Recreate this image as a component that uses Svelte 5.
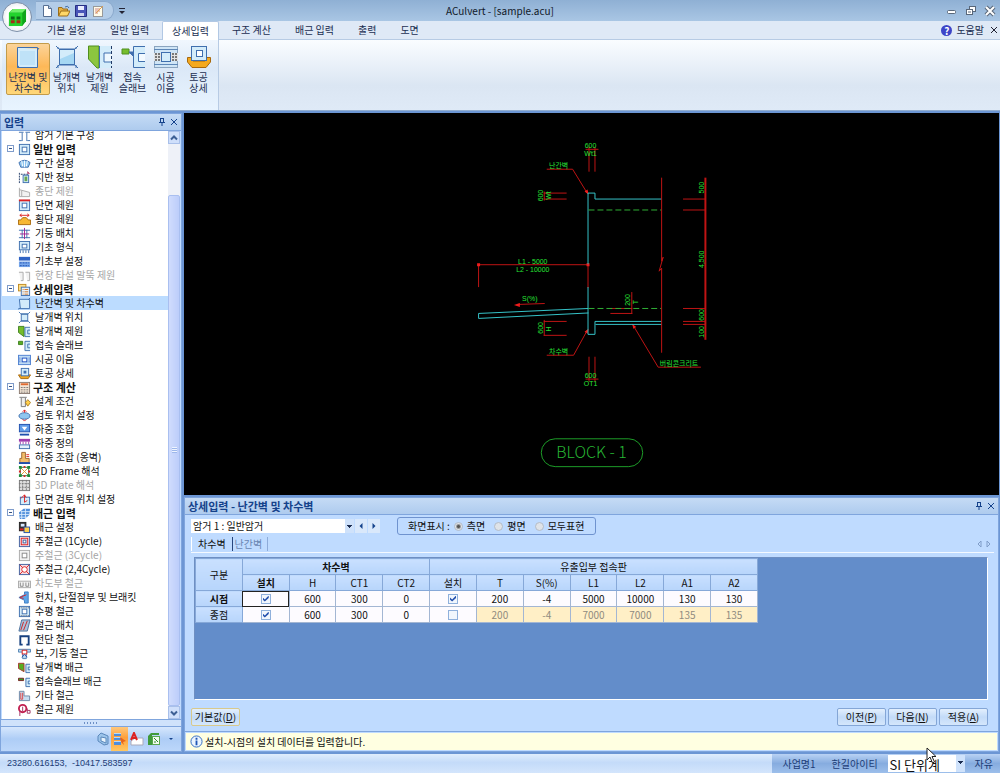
<script>
  let activeTab = $state('상세입력');
  let activeTool = $state(0);
  let selected = $state('난간벽 및 차수벽');
  let view = $state('측면');

  const tabs = ['기본 설정', '일반 입력', '상세입력', '구조 계산', '배근 입력', '출력', '도면'];

  const outline = 'fill="#d3ecfa" stroke="#3f6fae"';
  const pale = 'fill="#f2f2f2" stroke="#a9a9a9"';

  // ribbon artwork, 24 x 24
  const tools = [
    { lines: ['난간벽 및', '차수벽'], art: `<path d="M1.500 2.500V22.500H21.500V4M1.500 2.500H21.500V5L23 3M1 22.500L3 21" ${outline}/><path d="M4 6V20H19V6Z" fill="#bfe2f7"/>` },
    { lines: ['날개벽', '위치'], art: `<rect x="4.500" y="4.500" width="15" height="15" ${outline}/><path d="M1 1L4 4H20L23 1M1 23L4 20H20L23 23M3 2V4M21 2V4M3 20V23M21 20V23" fill="none" stroke="#3f6fae"/><path d="M5 14L19 8V19H5Z" fill="#a5d7f3"/>` },
    { lines: ['날개벽', '제원'], art: `<path d="M0.500 1H11V23H9L0.500 14Z" fill="#8cc63f" stroke="#4f8f1e"/><path d="M11 1H24V23H11Z" fill="#d3ecfa"/><path d="M24 8H16V17H24" fill="#eef8fe" stroke="#3f6fae"/><path d="M11.500 1V23" stroke="#3f6fae"/><path d="M24 1V23" stroke="#223a66" stroke-width="2" stroke-dasharray="3 2"/>` },
    { lines: ['접속', '슬래브'], art: `<path d="M1 4H8V9H1Z" fill="#76bd2c" stroke="#4f8f1e"/><path d="M8 7H12V11Z" fill="#426fae" stroke="#426fae"/><path d="M24 1.500H12.500V22.500H24" ${outline}/><path d="M24 8.500H17.500V16.500H24" fill="#f3faff" stroke="#3f6fae"/>` },
    { lines: ['시공', '이음'], art: `<rect x="0.500" y="1.500" width="23" height="21" fill="#cfe5f6" stroke="#8aa4bf"/><path d="M0 8H24V16H0Z" fill="#e2e2e2"/><path d="M0 4.500H24M0 19.500H24" stroke="#5e87b7"/><rect x="7.500" y="7.500" width="9" height="9" ${outline}/><path d="M1 9H6M1 12H6M1 15H6M18 9H23M18 12H23M18 15H23" stroke="#777" stroke-width="2" stroke-dasharray="2 1"/>` },
    { lines: ['토공', '상세'], art: `<path d="M0.500 12.500H6V16H18V12.500H23.500V17L19 22.500H5L0.500 17Z" fill="#f4a91f" stroke="#a8690c"/><rect x="4.500" y="1.500" width="15" height="14" ${outline}/><rect x="9.500" y="5.500" width="6" height="6" fill="#fff" stroke="#3f6fae"/>` }
  ];

  // tree artwork, 14 x 14
  const box = (s) => `<rect x="1.500" y="1.500" width="11" height="11" ${s}/><rect x="4.500" y="4.500" width="5" height="5" fill="#fff" stroke="#3f6fae"/>`;
  const tree = [
    { name: '암거 기본 구성', art: '<path d="M1 3.500H6M8 3.500H13M4.500 4V13M9.500 4V13M1 12.500H4M10 12.500H13" stroke="#3f6fae" fill="none"/><path d="M3 1H11" stroke="#333"/>' },
    { name: '일반 입력', group: true, art: box(outline) },
    { name: '구간 설정', art: '<path d="M1 6Q7 1 13 6L11 11H3Z" fill="#8fc6ef" stroke="#3f6fae"/><path d="M7 4V11M4 4L5 10M10 4L9 10" stroke="#fff"/>' },
    { name: '지반 정보', art: '<path d="M1.500 2V13M3 3.500H12" stroke="#223a66" stroke-dasharray="2 1"/><rect x="5.500" y="4.500" width="6" height="8" fill="#d3ecfa" stroke="#3f6fae"/><path d="M7 6H10V11H7Z" fill="#6aa84f"/><path d="M10 0L13 3H10Z" fill="#b03060"/>' },
    { name: '종단 제원', off: true, art: `<path d="M1.500 3V12.500H12.500V8L1.500 5M4 6V12" ${pale}/>` },
    { name: '단면 제원', art: box(outline) + '<path d="M1 1.500H13" stroke="#d22" stroke-width="2"/>' },
    { name: '횡단 제원', art: '<path d="M0.500 7.500H3L5 5H9L11 7.500H13.500V12.500H0.500Z" fill="#f7b733" stroke="#a8690c"/><path d="M2 2.500H12M4 1L2 2.500L4 4M10 1L12 2.500L10 4" stroke="#d22" fill="none"/>' },
    { name: '기둥 배치', art: '<path d="M1 3.500H13M1 11.500H13M4.500 3V12M9.500 3V12" stroke="#3f6fae"/><path d="M7 1V13M2 7.500H12" stroke="#a02090"/>' },
    { name: '기초 형식', art: `<rect x="1.500" y="0.500" width="11" height="9" ${outline}/><rect x="4.500" y="3.500" width="5" height="4" fill="#fff" stroke="#3f6fae"/><path d="M2.500 10V13M5.500 10V13M8.500 10V13M11.500 10V13" stroke="#3f6fae"/>` },
    { name: '기초부 설정', art: '<rect x="1" y="2" width="12" height="4" fill="#2f63c4"/><rect x="1" y="7" width="12" height="6" fill="#79a8ec"/><path d="M2 8.500H12M2 11.500H12" stroke="#1f4fae" stroke-dasharray="2 1"/>' },
    { name: '현장 타설 말뚝 제원', off: true, art: `<path d="M1 3.500H5.500V12.500H3M8 3.500H12.500V12.500H10" ${pale}/>` },
    { name: '상세입력', group: true, art: '<rect x="0.500" y="1.500" width="8" height="7" fill="#ffe08a" stroke="#c08a20"/><rect x="3.500" y="4.500" width="9" height="9" fill="#e5f2fc" stroke="#3f6fae"/><path d="M5 7H6M7 7H11M5 9.500H6M7 9.500H11M5 12H6M7 12H11" stroke="#d07020"/>' },
    { name: '난간벽 및 차수벽', art: `<path d="M1.500 2.500H12.500V12.500H2.500Z" ${outline}/><path d="M0 13L3 12M11 3L13 1" stroke="#3f6fae"/>` },
    { name: '날개벽 위치', art: `<rect x="3.500" y="3.500" width="7" height="7" ${outline}/><path d="M1 1L3 3H11L13 1M1 13L3 11H11L13 13" fill="none" stroke="#3f6fae"/>` },
    { name: '날개벽 제원', art: '<path d="M0.500 1.500H6.500V12.500L0.500 8Z" fill="#76bd2c" stroke="#3f8020"/><path d="M13 2.500H7.500V12.500H13M13 5.500H10.500V9.500H13" fill="#d3ecfa" stroke="#3f6fae"/>' },
    { name: '접속 슬래브', art: '<path d="M0.500 2.500H5V6H0.500Z" fill="#58ad22" stroke="#3f8020"/><path d="M13 2.500H7.500V12.500H13M13 5.500H10.500V9.500H13" fill="#d3ecfa" stroke="#3f6fae"/>' },
    { name: '시공 이음', art: '<rect x="0.500" y="2.500" width="13" height="10" fill="#bfdcf4" stroke="#4d7fd0"/><rect x="4.500" y="5.500" width="5" height="4" fill="#fff" stroke="#1f4fc0"/><path d="M2 5V10M12 5V10" stroke="#1f4fc0" stroke-dasharray="1 1"/>' },
    { name: '토공 상세', art: `<path d="M0.500 8.500H13.500L11 12.500H3Z" fill="#f4a91f" stroke="#a8690c"/><rect x="3.500" y="1.500" width="8" height="8" ${outline}/><rect x="6" y="4" width="3" height="3" fill="#3f6fae"/>` },
    { name: '구조 계산', group: true, art: '<rect x="1.500" y="1.500" width="11" height="12" fill="#f3e4d4" stroke="#8a7a70"/><path d="M3 3.500H11" stroke="#e06a30" stroke-width="2"/><path d="M3 7H11M3 9.500H11M3 12H11" stroke="#777" stroke-dasharray="2 1"/>' },
    { name: '설계 조건', art: '<path d="M1.500 2.500H9.500M3.500 3V12.500H8V3" fill="#eee" stroke="#777"/><path d="M10.500 5L13.500 8L10.500 12L8 8Z" fill="#ffcf4a" stroke="#b08020"/>' },
    { name: '검토 위치 설정', art: '<ellipse cx="7" cy="7.500" rx="6" ry="3.500" fill="#8fc6ef" stroke="#3f6fae"/><path d="M7 1V4M5 3L7 1L9 3M5 11L7 13L9 11" stroke="#d22" fill="none"/>' },
    { name: '하중 조합', art: '<rect x="1.500" y="1.500" width="11" height="8" fill="#5f9be8" stroke="#1f4fae"/><path d="M4 4H10L7 8Z" fill="#fff"/><path d="M2 12.500H12" stroke="#1f4fae" stroke-width="2"/>' },
    { name: '하중 정의', art: '<path d="M1 2H13V5H1Z" fill="#a03cae"/><path d="M2.500 5V8M5.500 5V8M8.500 5V8M11.500 5V8" stroke="#a03cae"/><rect x="1.500" y="8.500" width="11" height="4" fill="#e5f2fc" stroke="#3f6fae"/>' },
    { name: '하중 조합 (옹벽)', art: '<path d="M4 1.500H8V8H12V12.500H2V8H4Z" fill="#f2bd6a" stroke="#9a6630"/><path d="M1 13H13" stroke="#1f4fae" stroke-width="2"/><path d="M9 4H12M9 6H12" stroke="#d22"/>' },
    { name: '2D Frame 해석', art: '<path d="M2.500 2.500H11.500V11.500H2.500Z" fill="none" stroke="#2b7a3b"/><path d="M2 2L12 12M12 2L2 12" stroke="#df9a30"/><path d="M1 1H4V4H1ZM10 1H13V4H10ZM1 10H4V13H1ZM10 10H13V13H10Z" fill="#1d8a3a"/><path d="M6 2H8M6 12H8M2 6V8M12 6V8" stroke="#d22" stroke-width="2"/>' },
    { name: '3D Plate 해석', off: true, art: '<rect x="1.500" y="1.500" width="11" height="11" fill="#ddd" stroke="#777"/><path d="M1 5H13M1 9H13M5 1V13M9 1V13" stroke="#777" stroke-dasharray="2 1"/>' },
    { name: '단면 검토 위치 설정', art: '<rect x="2.500" y="4.500" width="10" height="8" fill="#d3ecfa" stroke="#3f6fae"/><path d="M3 6L7 2L9 5M7 2V10L10 8" stroke="#d22" fill="none"/>' },
    { name: '배근 입력', group: true, art: '<path d="M1 6L6 2H13L12 9L7 13H2Z" fill="#4f8edb"/><path d="M1 8H12M2 11H10M4 4V13M8 2V13M3 5H13" stroke="#d8ebfc"/>' },
    { name: '배근 설정', art: '<rect x="1.500" y="1.500" width="7" height="9" fill="#333" stroke="#222"/><path d="M3 3H7V6H3Z" fill="#d8e8ff"/><rect x="6.500" y="6.500" width="6" height="6" fill="#ffcf4a" stroke="#1f4fae"/><path d="M2 9H6" stroke="#d22" stroke-width="2"/>' },
    { name: '주철근 (1Cycle)', art: '<rect x="1.500" y="1.500" width="11" height="11" fill="#f5dfe6" stroke="#3f5f9e"/><rect x="3.500" y="3.500" width="7" height="7" fill="none" stroke="#d22"/><rect x="5.500" y="5.500" width="3" height="3" fill="#fff" stroke="#3f5f9e"/>' },
    { name: '주철근 (3Cycle)', off: true, art: `<rect x="1.500" y="1.500" width="11" height="11" ${pale}/><rect x="4.500" y="4.500" width="5" height="5" fill="#fff" stroke="#888"/>` },
    { name: '주철근 (2,4Cycle)', art: '<rect x="1.500" y="1.500" width="11" height="11" fill="#f5dfe6" stroke="#3f5f9e"/><circle cx="7" cy="7" r="3" fill="#fff" stroke="#d22"/><path d="M2 2L5 5M12 2L9 5M2 12L5 9M12 12L9 9" stroke="#d22"/>' },
    { name: '차도부 철근', off: true, art: `<rect x="0.500" y="4.500" width="13" height="7" ${pale}/><path d="M2.500 6V10H5.500V6M8.500 6V10H11.500V6" fill="none" stroke="#888"/>` },
    { name: '헌치, 단절점부 및 브래킷', art: '<path d="M11 1V13H7V10L1 7L7 4V1Z" fill="#5fa5e8" stroke="#3a7cc4"/><path d="M2 7L9 4M2 7L6 8" stroke="#d22" fill="none"/>' },
    { name: '수평 철근', art: box(outline) + '<path d="M3 3H12M3 11.500H12" stroke="#556" stroke-dasharray="1 1"/>' },
    { name: '철근 배치', art: '<path d="M4 1H13L10 13H1Z" fill="#a9c2dc" stroke="#4a6f9a"/><path d="M6 3L3 12M10 2L6 12" stroke="#c22"/>' },
    { name: '전단 철근', art: '<path d="M5 12.500H2.500V3.500H11.500V12.500H9" fill="none" stroke="#17407f" stroke-width="2"/>' },
    { name: '보, 기둥 철근', art: '<path d="M0.500 2.500H13.500V5.500H9V12.500H5V5.500H0.500Z" fill="#bcd9f0" stroke="#4d7fb0"/><rect x="4.500" y="3.500" width="5" height="4" fill="#fff" stroke="#d22"/><path d="M4 11L7 8L10 11" stroke="#1f4fae" fill="none"/>' },
    { name: '날개벽 배근', art: '<path d="M0.500 2.500H6.500V11.500L0.500 8Z" fill="#58ad22" stroke="#a33"/><path d="M13 3.500H8.500V12.500H13M13 6.500H11V9.500H13" fill="#d3ecfa" stroke="#3f6fae"/>' },
    { name: '접속슬래브 배근', art: '<path d="M0.500 3.500H6V6H0.500Z" fill="#3c9a22" stroke="#722"/><path d="M13 3.500H8.500V12.500H13M13 6.500H11V9.500H13" fill="#d3ecfa" stroke="#3f6fae"/>' },
    { name: '기타 철근', art: '<path d="M1.500 2.500H6.500V7.500H12.500V12.500H1.500Z" fill="#c7dcf0" stroke="#6d87a5"/><path d="M3 4V11H5V4" fill="none" stroke="#d44"/>' },
    { name: '철근 제원', art: '<circle cx="5" cy="6" r="4" fill="#fff" stroke="#c22050" stroke-width="2"/><path d="M5 4V9M2 9V14M10 6V11H13V8H10" stroke="#a03060" fill="none"/>' }
  ];

  const columns = ['H', 'CT1', 'CT2', '설치', 'T', 'S(%)', 'L1', 'L2', 'A1', 'A2'];
  const rows = $state([
    { name: '시점', wall: true, slab: true, left: [600, 300, 0], right: [200, -4, 5000, 10000, 130, 130] },
    { name: '종점', wall: true, slab: false, left: [600, 300, 0], right: [200, -4, 7000, 7000, 135, 135] }
  ]);
</script>

<div class="window">
  <header>
    <div class="titlebar">
      <div class="quick">
        <button aria-label="새 파일"><svg viewBox="0 0 12 12"><path d="M2.500 0.500H7.500L10.500 3.500V11.500H2.500Z" fill="#fff" stroke="#566f93" /><path d="M7.500 0.500V3.500H10.500" fill="#bcd" stroke="#566f93" /></svg></button>
        <button aria-label="열기"><svg viewBox="0 0 12 12"><path d="M0.500 2.500H4L5 4H9.500V10.500H0.500Z" fill="#e8b040" stroke="#9a6d1a" /><path d="M3 6H12L9.500 11H0.500Z" fill="#ffd868" stroke="#9a6d1a" /><path d="M7 2Q10 0 11 3" fill="none" stroke="#3f6fae" /></svg></button>
        <button aria-label="저장"><svg viewBox="0 0 12 12"><path d="M0.500 0.500H11.500V11.500H0.500Z" fill="#4a55b8" stroke="#272f83" /><path d="M3 1H9V5H3Z" fill="#e9edff" /><path d="M3 8H9V11H3Z" fill="#cfd5ee" /></svg></button>
        <button aria-label="편집"><svg viewBox="0 0 12 12"><rect x="1.500" y="1.500" width="9" height="10" fill="#fffbe8" stroke="#999" /><path d="M3 4H8M3 6H8M3 8H6" stroke="#c88" /><path d="M4 8L11 1" stroke="#e0a050" /></svg></button>
      </div>
      <button class="more" aria-label="도구 모음 사용자 지정"><svg viewBox="0 0 8 8"><path d="M1 1.500H7" stroke="#223" /><path d="M1 4H7L4 7Z" fill="#223" /></svg></button>
      <h1>ACulvert - [sample.acu]</h1>
      <div class="controls">
        <button aria-label="최소화"><svg viewBox="0 0 12 12"><rect x="1.500" y="5.500" width="8" height="3" rx="1" fill="#fff" stroke="#596779" /></svg></button>
        <button aria-label="이전 크기로"><svg viewBox="0 0 12 12"><rect x="4.500" y="1.500" width="6" height="5" fill="#fff" stroke="#596779" /><rect x="1.500" y="4.500" width="6" height="5" fill="#fff" stroke="#596779" /><path d="M3 7H6" stroke="#596779" /></svg></button>
        <button aria-label="닫기"><svg viewBox="0 0 12 12"><path d="M2 2L10 10M10 2L2 10" stroke="#596779" stroke-width="4" /><path d="M2 2L10 10M10 2L2 10" stroke="#fff" stroke-width="2" /></svg></button>
      </div>
    </div>
    <button class="orb" aria-label="응용 프로그램 메뉴">
      <svg viewBox="0 0 20 20"><path d="M1 5L5 1H19V14L15 19H1Z" fill="#0fa51b" /><path d="M1 5L5 1H19L15 5Z" fill="#6df06a" /><path d="M1 5H15V19H1Z" fill="#22d32d" /><path d="M3 9H7V12H3ZM9 9H13V12H9Z" fill="#0b6a17" /><path d="M3 13H7V16H3ZM9 13H13V16H9Z" fill="#a33018" /></svg>
    </button>
    <nav>
      {#each tabs as tab}
        <button class:active={tab === activeTab} onclick={() => (activeTab = tab)}>{tab}</button>
      {/each}
      <div class="help">
        <a href="#help"><span class="question">?</span>도움말</a>
        <button aria-label="문서 닫기"><svg viewBox="0 0 8 8"><path d="M1 1L7 7M7 1L1 7" stroke="#223" stroke-width="1" /></svg></button>
      </div>
    </nav>
    <div class="ribbon">
      <div class="tools">
        {#each tools as tool, index}
          <button class:wide={index === 0} class:on={index === activeTool} onclick={() => (activeTool = index)}>
            <svg viewBox="0 0 24 24">{@html tool.art}</svg>
            {#each tool.lines as line}<span>{line}</span>{/each}
          </button>
        {/each}
      </div>
    </div>
  </header>

  <main>
    <aside>
      <div class="panel-title">
        <h2>입력</h2>
        <button aria-label="고정"><svg viewBox="0 0 8 8"><path d="M2.500 0V4.500M5.500 0V4.500M1 4.500H7M4 5V8M2 0.500H6" stroke="#15428b" fill="none" /></svg></button>
        <button aria-label="패널 닫기"><svg viewBox="0 0 8 8"><path d="M1 1L7 7M7 1L1 7" stroke="#15428b" stroke-width="1" /></svg></button>
      </div>
      <div class="tree">
        <ul>
          {#each tree as item}
            <li class:group={item.group} class:current={item.name === selected}>
              {#if item.group}<button class="toggle" aria-label="{item.name} 접기"></button>{/if}
              <button class="item" disabled={item.off} onclick={() => (selected = item.name)}>
                <svg viewBox="0 0 14 14">{@html item.art}</svg>{item.name}
              </button>
            </li>
          {/each}
        </ul>
        <div class="scroll">
          <button aria-label="위로"><svg viewBox="0 0 8 8"><path d="M1 5.500L4 2.500L7 5.500" stroke="#3d5f95" stroke-width="2" fill="none" /></svg></button>
          <div class="track"><div class="thumb"></div></div>
          <button aria-label="아래로"><svg viewBox="0 0 8 8"><path d="M1 2.500L4 5.500L7 2.500" stroke="#3d5f95" stroke-width="2" fill="none" /></svg></button>
        </div>
      </div>
      <div class="splitter"></div>
      <div class="dock">
        <button aria-label="모델"><svg viewBox="0 0 14 14"><path d="M2 4L5 1L12 4V12L8 13L2 9Z" fill="#9cc4ea" stroke="#5b88bb" /><path d="M5 5L10 6V11L5 9Z" fill="#e7f3fd" stroke="#5b88bb" /></svg></button>
        <button class="on" aria-label="입력"><svg viewBox="0 0 14 14"><path d="M1 1H8V4H1ZM1 5H8V8H1ZM1 9H8V13H1Z" fill="#4f8edb" /><path d="M1 1.500H8M1 5.500H8M1 9.500H8" stroke="#b9daf7" /><path d="M7 5L13 9L10 10L11 13L8 10Z" fill="#e8641c" /></svg></button>
        <button aria-label="문자"><svg viewBox="0 0 14 14"><path d="M5 6H13V13H1V9Z" fill="#fff" stroke="#aab" /><path d="M1 8L4 1L7 8M2 6H6" stroke="#d22" stroke-width="2" fill="none" /></svg></button>
        <button aria-label="도면"><svg viewBox="0 0 14 14"><path d="M4 1H12V3H5V13H1V4Z" fill="#3f9a3a" /><rect x="5.500" y="4.500" width="7" height="8" fill="#f2fbef" stroke="#5aa84f" /><path d="M7 6L11 10M7 10H9" stroke="#2d8a2a" /></svg></button>
        <button class="small" aria-label="더 보기"><svg viewBox="0 0 8 8"><path d="M2 3H6L4 5Z" fill="#15428b" /></svg></button>
      </div>
    </aside>

    <div class="work">
      <div class="canvas">
        <svg viewBox="184 113 814 384" role="img" aria-label="BLOCK - 1">
          <g class="red">
            <path d="M588.500 147V172M594.500 147V172M585 149.500H598" />
            <path d="M546 169.500H572L587 194M543 193.500H566M543 199.500H566M543.500 192V201" />
            <path d="M661.500 178V262L663 258L659 272L661.500 269V354" />
            <path d="M683 199.500H706M683 210.500H706M683 309.500H706M683 322.500H706M683 325.500H706" />
            <path d="M705.500 178V341" class="heavy" />
            <path d="M477.500 288V265.500H588M587.500 265V289" />
            <path d="M516 305.500L544 304.500M543.500 321V337M543 322.500H566M543 336.500H566" />
            <path d="M610 309.500H632M610 314.500H632M631.500 293V315" />
            <path d="M546 356.500H573L587 331M588.500 358V383M594.500 358V383M585 380.500H598" />
            <path d="M632 325L658 368.500H701" />
            <path d="M513 306L519 304V308ZM588 195L584 192L587 190ZM588 330L587 335L584 333ZM632 325L636 328L633 330Z" class="solid" />
            <path d="M476 264H479V267H476ZM586 264H589V267H586Z" class="solid" />
          </g>
          <g class="cyan">
            <path d="M587.500 265V193.500H594.500V199.500H661M587.500 288V335.500H594.500V322.500H661M595 325.500H661" />
            <path d="M588 309.500L477.500 314.500V319.500L588 314" />
          </g>
          <g class="dash"><path d="M588 210.500H661M588 309.500H661" /></g>
          <g class="labels">
            <text x="590" y="148">600</text>
            <text x="590" y="156">Wt1</text>
            <text x="558" y="168">난간벽</text>
            <text x="532" y="265">L1 - 5000</text>
            <text x="532" y="273">L2 - 10000</text>
            <text x="529" y="302">S(%)</text>
            <text x="558" y="355">차수벽</text>
            <text x="679" y="367">버림콘크리트</text>
            <text x="590" y="379">600</text>
            <text x="590" y="387">OT1</text>
            <text transform="translate(542 196) rotate(-90)">600</text>
            <text transform="translate(550 196) rotate(-90)">Wt</text>
            <text transform="translate(542 329) rotate(-90)">600</text>
            <text transform="translate(550 330) rotate(-90)">H</text>
            <text transform="translate(630 301) rotate(-90)">200</text>
            <text transform="translate(638 303) rotate(-90)">T</text>
            <text transform="translate(704 188) rotate(-90)">500</text>
            <text transform="translate(704 260) rotate(-90)">4,500</text>
            <text transform="translate(704 316) rotate(-90)">600</text>
            <text transform="translate(704 333) rotate(-90)">100</text>
          </g>
          <rect x="540.500" y="440.500" width="102" height="28" rx="14" class="pill" />
          <text x="591" y="460" class="block">BLOCK - 1</text>
        </svg>
      </div>

      <section>
        <div class="panel-title">
          <h2>상세입력 - 난간벽 및 차수벽</h2>
          <button aria-label="고정"><svg viewBox="0 0 8 8"><path d="M2.500 0V4.500M5.500 0V4.500M1 4.500H7M4 5V8M2 0.500H6" stroke="#15428b" fill="none" /></svg></button>
          <button aria-label="패널 닫기"><svg viewBox="0 0 8 8"><path d="M1 1L7 7M7 1L1 7" stroke="#15428b" stroke-width="1" /></svg></button>
        </div>
        <div class="form">
          <div class="options">
            <div class="combo">
              <select aria-label="암거 선택"><option>암거 1 : 일반암거</option></select>
            </div>
            <button class="step" aria-label="이전 암거"><svg viewBox="0 0 8 8"><path d="M5.500 1V7L2.500 4Z" fill="#15428b" /></svg></button>
            <button class="step" aria-label="다음 암거"><svg viewBox="0 0 8 8"><path d="M2.500 1V7L5.500 4Z" fill="#15428b" /></svg></button>
            <div class="views" role="radiogroup" aria-label="화면표시">
              <span>화면표시 :</span>
              {#each ['측면', '평면', '모두표현'] as name}
                <label><input type="radio" name="view" value={name} bind:group={view} />{name}</label>
              {/each}
            </div>
          </div>
          <div class="subtabs">
            <button class="active">차수벽</button>
            <button>난간벽</button>
            <svg viewBox="0 0 20 8"><path d="M7 1V7L4 4ZM13 1V7L16 4Z" fill="none" stroke="#7f9cc8" /></svg>
          </div>
          <div class="sheet">
            <table>
              <thead>
                <tr><th rowspan="2">구분</th><th colspan="4" class="strong">차수벽</th><th colspan="7">유출입부 접속판</th></tr>
                <tr>
                  <th class="strong">설치</th>
                  {#each columns as column}<th>{column}</th>{/each}
                </tr>
              </thead>
              <tbody>
                {#each rows as row, index}
                  <tr>
                    <th class:strong={index === 0}>{row.name}</th>
                    <td class:focused={index === 0}><input type="checkbox" aria-label="{row.name} 차수벽 설치" bind:checked={row.wall} /></td>
                    {#each row.left as value}<td>{value}</td>{/each}
                    <td><input type="checkbox" aria-label="{row.name} 접속판 설치" bind:checked={row.slab} /></td>
                    {#each row.right as value}<td class:locked={!row.slab}>{value}</td>{/each}
                  </tr>
                {/each}
              </tbody>
            </table>
          </div>
          <div class="actions">
            <button class="default">기본값(<u>D</u>)</button>
            <button>이전(<u>P</u>)</button>
            <button>다음(<u>N</u>)</button>
            <button>적용(<u>A</u>)</button>
          </div>
        </div>
        <p class="info">
          <svg viewBox="0 0 14 14"><circle cx="7" cy="7" r="6" fill="#eaf4ff" stroke="#2a66c0" /><path d="M7 3V5M7 6V11" stroke="#1f55b5" stroke-width="2" /></svg>
          설치-시점의 설치 데이터를 입력합니다.
        </p>
      </section>
    </div>
  </main>

  <footer>
    <span class="coords">23280.616153,&nbsp; -10417.583597</span>
    <div class="project">
      <span>사업명1</span>
      <span>한길아이티</span>
      <div class="combo units"><select aria-label="단위계"><option>SI 단위계</option></select></div>
      <span>자유</span>
    </div>
  </footer>

  <svg class="pointer" viewBox="0 0 12 18"><path d="M1 1V13L4 10L6.500 16L8.500 15L6 9.500H10Z" fill="#fff" stroke="#222" /></svg>
</div>

<style>
  :global(body) {
    margin: 0;
  }
  .window {
    position: relative;
    display: flex;
    flex-direction: column;
    height: 100vh;
    background: #a9c7ee;
    color: #111;
    font-family: "Noto Sans CJK KR", sans-serif;
    font-size: 10px;
    line-height: 14px;
    overflow: hidden;
  }
  button, select, input {
    font: inherit;
    color: inherit;
    margin: 0;
    padding: 0;
    border: 0;
    background: none;
    box-sizing: border-box;
  }
  button {
    display: flex;
    align-items: center;
    justify-content: center;
    white-space: nowrap;
  }
  svg {
    display: block;
  }
  h1, h2, p, ul {
    margin: 0;
    padding: 0;
    font-size: inherit;
    font-weight: normal;
  }

  /* title bar and ribbon */
  header {
    position: relative;
    color: #1c2f52;
  }
  .titlebar {
    display: flex;
    align-items: center;
    height: 21px;
    padding: 0 4px 0 36px;
    background: linear-gradient(#8fb0d4, #a9c6e4);
  }
  .quick {
    display: flex;
    gap: 5px;
    padding: 2px 9px 2px 5px;
    border: 1px solid #8ba9cc;
    border-left: 0;
    border-radius: 0 9px 9px 0;
    background: #b4cde8;
    box-sizing: border-box;
    height: 19px;
  }
  .quick svg, .controls svg {
    width: 12px;
    height: 12px;
  }
  .more svg, .help svg, .panel-title svg, .scroll svg, .step svg, .small svg {
    width: 8px;
    height: 8px;
  }
  .more {
    margin-left: 4px;
  }
  h1 {
    flex: 1;
    text-align: center;
    padding-right: 72px;
    color: #101828;
  }
  .controls {
    display: flex;
    gap: 7px;
  }
  .orb {
    position: absolute;
    left: 2px;
    top: 2px;
    width: 30px;
    height: 30px;
    border: 1px solid #7d8fa8;
    border-radius: 50%;
    background: radial-gradient(#fff 50%, #d3dbe6);
  }
  .orb svg {
    width: 19px;
    height: 19px;
  }
  nav {
    display: flex;
    height: 19px;
    padding-left: 35px;
    background: #dfe9f6;
    border-bottom: 1px solid #b7cbe4;
    box-sizing: border-box;
  }
  nav > button {
    padding: 0 12px;
  }
  nav > button.active {
    height: 19px;
    padding: 0 9px;
    margin: 0 1px;
    background: #fff;
    border: 1px solid #b2c8e4;
    border-bottom: 0;
    border-radius: 2px 2px 0 0;
  }
  .help {
    display: flex;
    align-items: center;
    gap: 6px;
    margin-left: auto;
    padding-right: 2px;
  }
  .help a {
    display: flex;
    align-items: center;
    gap: 4px;
    color: inherit;
    text-decoration: none;
  }
  .question {
    width: 11px;
    height: 11px;
    border-radius: 50%;
    background: #3d45c8;
    color: #fff;
    font-weight: bold;
    line-height: 11px;
    text-align: center;
  }
  .ribbon {
    height: 71px;
    padding: 0 2px;
    background: linear-gradient(#fafdff, #dbe6f3 65%, #dfeaf7);
    border-bottom: 1px solid #93aed0;
    display: flex;
    box-sizing: border-box;
  }
  .tools {
    display: flex;
    align-items: flex-start;
    padding: 3px 3px 0 4px;
    border-right: 1px solid #b7cbe4;
    background: linear-gradient(#f0f7fe, #dbe8f7 40%, #e8f4ff);
  }
  .tools button {
    flex-direction: column;
    width: 33px;
    height: 52px;
    border: 1px solid transparent;
    line-height: 11px;
  }
  .tools button.wide {
    width: 44px;
  }
  .tools button.on {
    border-color: #c29b4a;
    border-radius: 2px;
    background: linear-gradient(#fbd49a, #fdb858 45%, #ffd779);
  }
  .tools svg {
    width: 24px;
    height: 24px;
    margin-bottom: 2px;
    flex: none;
  }

  main {
    display: flex;
    flex: 1;
    min-height: 0;
    gap: 2px;
    padding: 2px 1px 2px 0;
    background: #6c96d4;
  }
  .panel-title {
    display: flex;
    align-items: center;
    gap: 4px;
    height: 16px;
    padding: 0 3px;
    background: linear-gradient(#c5dbf5, #aecbee);
    border-bottom: 1px solid #7fa5dd;
  }
  .panel-title h2 {
    flex: 1;
    color: #15428b;
    font-weight: bold;
    font-size: 11px;
  }

  /* input tree */
  aside {
    display: flex;
    flex-direction: column;
    width: 180px;
    border: 1px solid #7fa5dd;
    background: #bfdbff;
  }
  .tree {
    display: flex;
    flex: 1;
    min-height: 0;
    overflow: hidden;
    margin: 0 1px;
    background: #fff;
  }
  ul {
    flex: 1;
    margin-top: -3px;
    list-style: none;
  }
  li {
    display: flex;
    height: 14px;
    padding-left: 16px;
  }
  li.group {
    padding-left: 5px;
    font-weight: bold;
    font-size: 11px;
  }
  li.current {
    background: #bcdcff;
  }
  .item svg {
    width: 13px;
    height: 13px;
    margin-right: 4px;
  }
  .group .item svg {
    margin-right: 2px;
  }
  .item:disabled {
    color: #a6a6a6;
  }
  .toggle {
    width: 7px;
    height: 7px;
    margin: 3px 4px 0 0;
    border: 1px solid #7f9ccb;
    background: linear-gradient(#34507f, #34507f) center / 3px 1px no-repeat;
  }
  .scroll {
    display: flex;
    flex-direction: column;
    width: 12px;
    background: #eef1f8;
  }
  .scroll button {
    height: 13px;
    border: 1px solid #a9c0ea;
    background: #cfdffb;
  }
  .track {
    flex: 1;
    display: flex;
    flex-direction: column;
    justify-content: flex-end;
  }
  .thumb {
    height: 91%;
    border: 1px solid #a9bff0;
    border-radius: 2px;
    background: repeating-linear-gradient(#eef4ff 0 1px, #9db7ea 1px 2px) center / 5px 6px no-repeat, linear-gradient(90deg, #d0dcfd, #bccdfa);
    box-sizing: border-box;
  }
  .splitter {
    height: 6px;
    border-top: 1px solid #7fa5dd;
    background: repeating-linear-gradient(90deg, #6d8fc4 0 1px, transparent 1px 3px) center / 15px 2px no-repeat, #cfe2fb;
  }
  .dock {
    display: flex;
    justify-content: flex-end;
    height: 24px;
    padding-right: 2px;
    border-top: 1px solid #7fa5dd;
    background: linear-gradient(#d6e7fd, #aecdf6 50%, #bcd7fa);
  }
  .dock button {
    width: 17px;
  }
  .dock button.on {
    background: linear-gradient(#ffc87c, #fd9f3b 45%, #ffc863);
  }
  .dock svg {
    width: 14px;
    height: 14px;
  }
  .dock .small svg {
    width: 8px;
    height: 8px;
  }

  /* drawing */
  .work {
    display: flex;
    flex: 1;
    flex-direction: column;
    min-width: 0;
    gap: 2px;
  }
  .canvas {
    flex: 1;
    min-height: 0;
    background: #000;
  }
  .canvas svg {
    width: 100%;
    height: 100%;
  }
  .canvas path, .canvas rect {
    fill: none;
  }
  .red {
    stroke: #c01414;
  }
  .canvas .solid {
    fill: #f01c1c;
    stroke: none;
  }
  .heavy {
    stroke-width: 2px;
  }
  .cyan {
    stroke: #35c4c9;
  }
  .dash {
    stroke: #2fae35;
    stroke-dasharray: 6 3;
  }
  .pill {
    stroke: #1d9c28;
  }
  .labels {
    fill: #27e336;
    font-family: "Liberation Sans", "Noto Sans CJK KR", sans-serif;
    font-size: 7px;
    text-anchor: middle;
  }
  .block {
    fill: #27b534;
    font-size: 16px;
    font-weight: 300;
    text-anchor: middle;
  }

  /* input form */
  section {
    background: #bfdbff;
    border: 1px solid #7fa5dd;
  }
  .form {
    padding: 2px 10px 5px 6px;
    border-bottom: 1px solid #7fa5dd;
  }
  .options {
    display: flex;
    align-items: center;
    height: 18px;
  }
  .combo {
    position: relative;
    display: flex;
    width: 163px;
    height: 14px;
    background: #fff;
  }
  .combo select {
    flex: 1;
    appearance: none;
    padding-left: 2px;
  }
  .combo::after {
    content: "";
    position: absolute;
    right: 0;
    top: 0;
    bottom: 0;
    width: 9px;
    background: linear-gradient(#1b2c50, #1b2c50) center 6px / 5px 1px no-repeat, linear-gradient(#1b2c50, #1b2c50) center 7px / 3px 1px no-repeat, linear-gradient(#1b2c50, #1b2c50) center 8px / 1px 1px no-repeat, #cfe2fb;
    pointer-events: none;
  }
  .step {
    width: 12px;
    height: 14px;
    margin-left: 1px;
    background: #d9e8fb;
  }
  .views {
    display: flex;
    align-items: center;
    gap: 4px;
    height: 18px;
    margin-left: 17px;
    padding: 0 11px 0 10px;
    border: 1px solid #6f93cf;
    border-radius: 3px;
    box-sizing: border-box;
  }
  .views label {
    display: flex;
    align-items: center;
    gap: 4px;
    margin-right: 5px;
  }
  .views label:last-child {
    margin-right: 0;
  }
  input[type="radio"] {
    appearance: none;
    width: 9px;
    height: 9px;
    border: 1px solid #b4bcc8;
    border-radius: 50%;
    background: #dfe3e8;
  }
  input[type="radio"]:checked {
    background: radial-gradient(#555 0 1px, #dfe3e8 3px);
  }
  .subtabs {
    display: flex;
    align-items: center;
    height: 16px;
    margin: 1px -6px 4px 0;
    border-bottom: 1px solid #f4f9ff;
    color: #6a86b2;
  }
  .subtabs button {
    height: 14px;
    padding: 0 5px 0 2px;
    border-right: 1px solid #8dabd9;
  }
  .subtabs .active {
    padding: 0 6px;
    border-left: 1px solid #fff;
    border-right: 1px solid #26467d;
    color: #111;
  }
  .subtabs svg {
    width: 20px;
    height: 8px;
    margin-left: auto;
  }
  .sheet {
    min-height: 141px;
    margin-left: 3px;
    border: 1px solid #6e8fc2;
    border-right-color: #fff;
    border-bottom-color: #fff;
    background: #638dca;
  }
  table {
    width: 563px;
    border-collapse: collapse;
    table-layout: fixed;
    line-height: 13px;
    text-align: center;
  }
  th, td {
    height: 13px;
    padding: 1px 0;
    border: 1px solid #a3b6d3;
    font-weight: normal;
  }
  th {
    background: linear-gradient(#c9e0ff, #b7d5fb);
    border-color: #86a8d8;
  }
  th.strong {
    font-weight: bold;
  }
  td {
    background: #fdfbff;
  }
  td.locked {
    background: #ffefc6;
    color: #8f8b80;
  }
  td.focused {
    outline: 1px solid #222;
    outline-offset: -1px;
  }
  input[type="checkbox"] {
    appearance: none;
    display: block;
    width: 10px;
    height: 10px;
    margin: 0 auto;
    border: 1px solid #8fb0dc;
    background: #f1f6fd;
  }
  input[type="checkbox"]:checked::before {
    content: "";
    display: block;
    width: 6px;
    height: 6px;
    margin: 1px;
    background: #2450ae;
    clip-path: polygon(0 35%, 35% 65%, 100% 0, 100% 40%, 35% 100%, 0 70%);
  }
  .actions {
    display: flex;
    gap: 2px;
    margin-top: 8px;
  }
  .actions button {
    width: 49px;
    height: 18px;
    border: 1px solid #84a6d6;
    border-radius: 2px;
    background: linear-gradient(#e3effd, #c3dbf8 50%, #d4e6fb);
  }
  .actions .default {
    margin-right: auto;
    border-color: #d8c98c;
  }
  .info {
    display: flex;
    align-items: center;
    gap: 2px;
    height: 17px;
    margin: 1px;
    padding-left: 4px;
    background: #ffffe1;
  }
  .info svg {
    width: 13px;
    height: 13px;
  }

  footer {
    display: flex;
    align-items: stretch;
    height: 19px;
    line-height: 19px;
    background: linear-gradient(#e0edfd, #c4dbf9 45%, #d3e5fc);
    color: #1c3c76;
  }
  .coords {
    flex: 1;
    padding-left: 7px;
    font-family: "Liberation Sans", sans-serif;
    font-size: 9px;
  }
  .project {
    display: flex;
    gap: 16px;
    padding: 0 7px 0 10px;
    background: linear-gradient(#b9d2f4, #86acdf 50%, #9dbfeb);
  }
  .units {
    width: 77px;
    height: 17px;
    margin: 1px -6px 0;
    font-size: 13px;
    color: #111;
  }
  .pointer {
    position: absolute;
    right: 62px;
    bottom: 8px;
    width: 12px;
    height: 18px;
  }
</style>
